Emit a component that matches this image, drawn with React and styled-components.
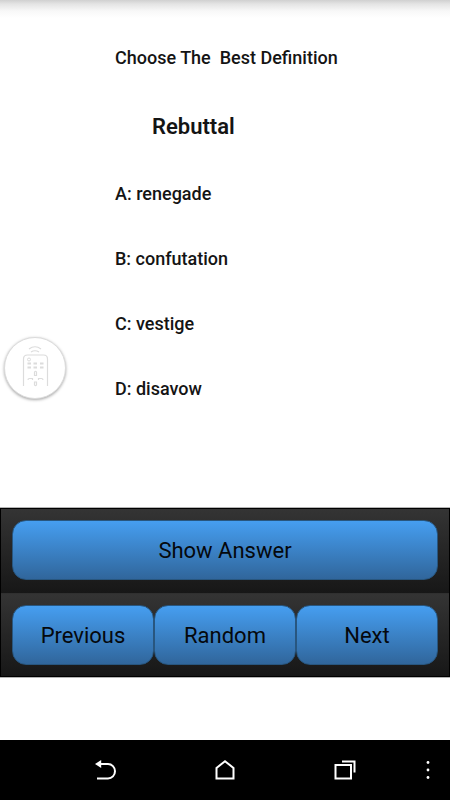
import React, { useState } from "react";
import styled, { createGlobalStyle } from "styled-components";

const GlobalStyle = createGlobalStyle`
  * {
    box-sizing: border-box;
  }

  body {
    margin: 0;
    background: #fff;
    font-family: Roboto, sans-serif;
  }
`;

const Screen = styled.div`
  position: relative;
  display: flex;
  flex-direction: column;
  min-height: 100vh;
`;

const Quiz = styled.main`
  flex: 1 0 auto;
  padding: 46px 0 0 115px;
  color: #141414;
  background: linear-gradient(#d0d0d0, #e4e4e4 4px, #f8f8f8 11px, #fff 18px);
`;

const Prompt = styled.h1`
  margin: 0;
  font-size: 18px;
  line-height: 24px;
  font-weight: 500;
  white-space: pre-wrap;
`;

const Word = styled.h2`
  margin: 41px 0 39px 37px;
  font-size: 22px;
  line-height: 32px;
  font-weight: 600;
`;

const Choices = styled.ul`
  display: flex;
  flex-direction: column;
  gap: 41px;
  margin: 0;
  padding: 0;
  list-style: none;
`;

const Choice = styled.li`
  font-size: 18px;
  line-height: 24px;
  font-weight: 500;
`;

const Controls = styled.section`
  border: 1px solid #000;
  box-shadow: 0 0 0 1px #b4b4b4;
  margin-bottom: 63px;
`;

const ControlRow = styled.div`
  display: flex;
  padding: 11px 11px 13px;
  background: linear-gradient(#343434, #171717);

  & + & {
    padding-bottom: 11px;
    border-top: 1px solid #303030;
  }
`;

const ControlButton = styled.button`
  flex: 1 1 0;
  height: 60px;
  padding: 0;
  border: 1px solid #28567f;
  border-radius: 14px;
  background: linear-gradient(#469ff2, #30659a) border-box;
  color: #05080c;
  font-family: inherit;
  font-size: 22px;
  cursor: pointer;
`;

const RemoteButton = styled.button`
  position: absolute;
  top: 337px;
  left: 4px;
  width: 62px;
  height: 62px;
  padding: 0;
  border: 1px solid #dcdcdc;
  border-radius: 50%;
  background: #fff;
  box-shadow: 0 1px 3px rgba(0, 0, 0, 0.35);
  cursor: pointer;

  svg {
    display: block;
    margin: 0 auto;
  }
`;

const NavBar = styled.nav`
  display: grid;
  grid-template-columns: 45px repeat(3, 1fr) 45px;
  height: 60px;
  background: #000;
`;

const NavButton = styled.button`
  display: flex;
  align-items: center;
  justify-content: center;
  padding: 0;
  border: 0;
  background: none;
  color: #fff;
  cursor: pointer;

  &:first-child {
    grid-column: 2;
  }
`;

const iconProps = {
  width: 24,
  height: 24,
  viewBox: "0 0 24 24",
  fill: "none",
  stroke: "currentColor",
  strokeWidth: 2,
  "aria-hidden": true
};

const RemoteIcon = () => (
  <svg width="60" height="60" viewBox="0 0 60 60" fill="none" stroke="#dcdcdc" aria-hidden="true">
    <path d="M24 11q6-4.500 12 0M26 14q4-2.500 8 0" strokeWidth="1.2" />
    <path d="M18.500 48V21q0-4 4-4h16q4 0 4 4v27" strokeWidth="1.2" />
    <circle cx="24" cy="21.500" r="1.500" />
    <path d="M22.500 25.500h3.500M28.500 25.500h3.500M35 25.500h3.500M22.500 29.500h3.500M28.500 29.500h3.500M35 29.500h3.500" strokeWidth="1.800" />
    <path d="M29.500 37.500v-3.500q1-1.500 2 0v3.500zM29.500 44v3q1 1.500 2 0v-3zM27.500 42v-1.500h-3q-1.500 0-1.500 1.500M33.500 42v-1.500h3q1.500 0 1.500 1.500" strokeWidth="1.200" />
  </svg>
);

const choices = ["A: renegade", "B: confutation", "C: vestige", "D: disavow"];

export default function App() {
  const [shown, setShown] = useState(false);

  return (
    <Screen>
      <GlobalStyle />
      <Quiz>
        <Prompt>{"Choose The  Best Definition"}</Prompt>
        <Word>Rebuttal</Word>
        <Choices>
          {choices.map(choice => (
            <Choice key={choice}>{choice}</Choice>
          ))}
        </Choices>
      </Quiz>
      <RemoteButton type="button" aria-label="Remote control">
        <RemoteIcon />
      </RemoteButton>
      <Controls>
        <ControlRow>
          <ControlButton
            type="button"
            aria-pressed={shown}
            onClick={() => setShown(!shown)}
          >
            Show Answer
          </ControlButton>
        </ControlRow>
        <ControlRow>
          <ControlButton type="button">Previous</ControlButton>
          <ControlButton type="button">Random</ControlButton>
          <ControlButton type="button">Next</ControlButton>
        </ControlRow>
      </Controls>
      <NavBar>
        <NavButton type="button" aria-label="Back">
          <svg {...iconProps}>
            <path d="M6 6h9a7 7.250 0 0 1 0 14.500H4" />
            <path d="M2 6l6.200-4v8z" fill="currentColor" stroke="none" />
          </svg>
        </NavButton>
        <NavButton type="button" aria-label="Home">
          <svg {...iconProps}>
            <path d="M3.500 20.500V10L12 3.200l8.500 6.800v10.500z" />
          </svg>
        </NavButton>
        <NavButton type="button" aria-label="Recent apps">
          <svg {...iconProps}>
            <path d="M2.500 7h15.500v13.500H2.500zM9 3.500h12.500V14.500" />
          </svg>
        </NavButton>
        <NavButton type="button" aria-label="More options">
          <svg {...iconProps} fill="currentColor" stroke="none">
            <circle cx="12" cy="4.500" r="1.400" />
            <circle cx="12" cy="12" r="1.400" />
            <circle cx="12" cy="19.500" r="1.400" />
          </svg>
        </NavButton>
      </NavBar>
    </Screen>
  );
}
